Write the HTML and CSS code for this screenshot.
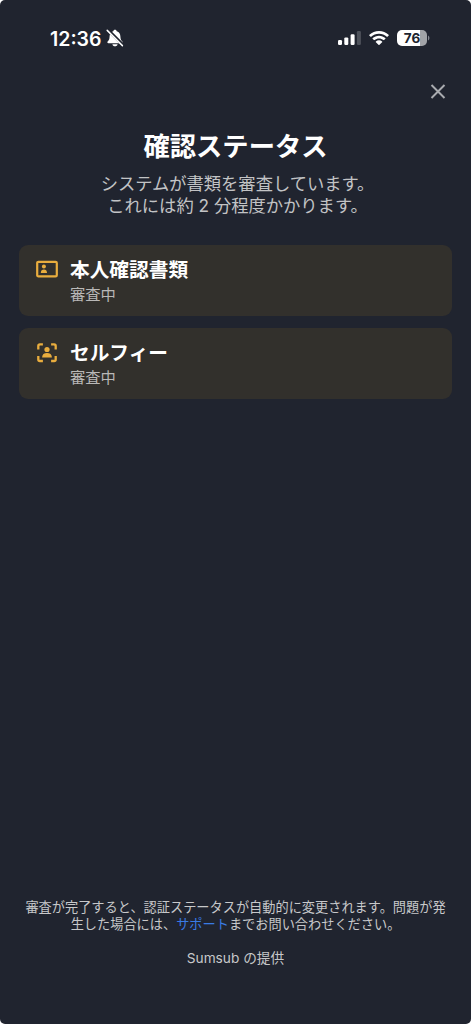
FILE: index.html
```html
<!DOCTYPE html>
<html lang="ja">
<head>
<meta charset="utf-8">
<title>確認ステータス</title>
<link rel="stylesheet" href="styles.css">
</head>
<body>
<div class="screen">
  <header class="statusbar">
    <div class="clock">
      <span class="time">12:36</span>
      <svg class="bell" width="18" height="18" viewBox="0 0 18 18">
        <path d="M9 .8C7.900 .8 7.400 1.500 7.300 2.300C4.700 3 3.700 5 3.600 7.400C3.500 10.300 2.900 11.100 1.800 12.200C1 13 1.300 14.200 2.400 14.200H15.600C16.700 14.200 17 13 16.200 12.200C15.100 11.100 14.500 10.300 14.400 7.400C14.300 5 13.300 3 10.700 2.300C10.600 1.500 10.100.8 9 .8ZM6.400 15.200H11.600C11.300 16.600 10.400 17.300 9 17.300S6.700 16.600 6.400 15.200Z" fill="#fff"/>
        <path d="M1.800 .8L17.200 16.200" stroke="#20242f" stroke-width="3.200"/>
        <path d="M1.200 1.400L16.400 16.600" stroke="#fff" stroke-width="1.500" stroke-linecap="round"/>
      </svg>
    </div>
    <div class="indicators">
      <svg width="23" height="16" viewBox="0 0 23 16" fill="#fff">
        <rect x="0" y="10" width="4" height="5" rx="1.2"/>
        <rect x="6.3" y="7.4" width="4" height="7.6" rx="1.2"/>
        <rect x="12.600" y="4.200" width="4" height="10.800" rx="1.200"/>
        <rect x="18.900" y="1" width="4" height="14" rx="1.200" fill="#4e525b"/>
      </svg>
      <svg class="wifi" width="20" height="16" viewBox="0 0 20 16" fill="#fff">
        <path d="M10 1C6.300 1 2.900 2.400.4 4.800C.1 5.100.1 5.300.3 5.500L1.500 6.700C1.700 6.900 2 6.900 2.200 6.700C4.300 4.800 7 3.700 10 3.700S15.700 4.800 17.800 6.700C18 6.900 18.300 6.900 18.500 6.700L19.700 5.500C19.900 5.300 19.900 5.100 19.600 4.800C17.100 2.400 13.700 1 10 1Z"/>
        <path d="M10 5.700C7.500 5.700 5.300 6.600 3.700 8.100C3.400 8.400 3.400 8.600 3.600 8.800L4.900 10.100C5.100 10.300 5.300 10.300 5.600 10.100C6.800 9.100 8.300 8.500 10 8.500S13.200 9.100 14.400 10.100C14.700 10.300 14.900 10.300 15.100 10.100L16.400 8.800C16.600 8.600 16.600 8.400 16.300 8.100C14.700 6.600 12.500 5.700 10 5.700Z"/>
        <path d="M10 10.300C8.800 10.300 7.700 10.700 6.900 11.400C6.600 11.700 6.600 11.900 6.900 12.200L9.500 14.800C9.800 15.100 10.200 15.100 10.500 14.800L13.100 12.200C13.400 11.900 13.400 11.700 13.100 11.400C12.300 10.700 11.200 10.300 10 10.300Z"/>
      </svg>
      <div class="battery"><div class="charge">76</div><svg width="3" height="6" viewBox="0 0 3 6"><path d="M1 .5C2.900 1.300 2.900 4.700 1 5.500Z" fill="#858890"/></svg></div>
    </div>
  </header>

  <div class="toolbar">
    <svg width="16" height="16" viewBox="0 0 16 16"><path d="M1.500 1L14.500 14M14.500 1L1.500 14" stroke="#a9abaf" stroke-width="2"/></svg>
  </div>

  <main class="content">
    <h1>確認ステータス</h1>
    <p class="lead">システムが書類を審査しています。<br>これには約 2 分程度かかります。</p>
    <section class="cards">
      <article class="card">
        <svg width="22" height="18" viewBox="0 0 22 18">
          <rect x="1.200" y="1.800" width="19.600" height="14.600" rx="1.200" fill="none" stroke="#e9ad3e" stroke-width="2.200"/>
          <circle cx="7.900" cy="6.600" r="2" fill="#e9ad3e"/>
          <path d="M4.800 13C4.800 10.500 6 9.500 7.900 9.500S11 10.500 11 13Z" fill="#e9ad3e"/>
        </svg>
        <div><h2>本人確認書類</h2><p>審査中</p></div>
      </article>
      <article class="card">
        <svg width="22" height="20" viewBox="0 0 22 20">
          <path d="M2.300 6.400V3Q2.300 1.400 3.900 1.400H6.900M15.100 1.400H18.100Q19.700 1.400 19.700 3V6.400M19.700 13V16.400Q19.700 18 18.100 18H15.100M6.900 18H3.900Q2.300 18 2.300 16.400V13" fill="none" stroke="#e9ad3e" stroke-width="2.300"/>
          <circle cx="11" cy="6.500" r="2.600" fill="#e9ad3e"/>
          <path d="M6.100 14.400C6.200 11.300 8 9.900 11 9.900S15.800 11.300 15.900 14.400Z" fill="#e9ad3e"/>
        </svg>
        <div><h2>セルフィー</h2><p>審査中</p></div>
      </article>
    </section>
  </main>

  <footer class="footer">
    <p>審査が完了すると、認証ステータスが自動的に変更されます。問題が発<br>生した場合には、<a>サポート</a>までお問い合わせください。</p>
    <p class="provider">Sumsub の提供</p>
  </footer>
</div>
</body>
</html>
```
FILE: styles.css
```css
* { box-sizing: border-box; }

body {
  margin: 0;
  background: #fff;
  font-family: Inter, "Noto Sans CJK JP", sans-serif;
}

h1, h2, p { margin: 0; }
svg { display: block; flex: none; }

.screen {
  height: 1024px;
  display: flex;
  flex-direction: column;
  background: #20242f;
  border-radius: 5px;
  color: #fff;
  overflow: hidden;
}

.statusbar {
  height: 76px;
  padding: 0 41px 0 50px;
  display: flex;
  align-items: center;
  justify-content: space-between;
}

.clock { display: flex; align-items: center; gap: 4px; }
.time { padding-top: 1px; font-size: 19.5px; font-weight: 600; line-height: 24px; }
.indicators { display: flex; align-items: center; gap: 8px; }

.battery { display: flex; align-items: center; }
.charge {
  width: 30px;
  height: 16px;
  border-radius: 5px;
  background: linear-gradient(90deg, #fff 76%, #a1a3a7 76%);
  color: #20242f;
  font-size: 13.5px;
  font-weight: 700;
  line-height: 16px;
  text-align: center;
}

.toolbar {
  height: 32px;
  padding-right: 25px;
  display: flex;
  align-items: center;
  justify-content: flex-end;
}

.content { padding: 21px 19px 0; text-align: center; }

h1 { font-size: 26.3px; font-weight: 700; line-height: 36px; }

.lead {
  margin-top: 8px;
  padding-left: 4px;
  color: #c2c3c5;
  font-size: 17.3px;
  line-height: 22px;
}

.cards {
  margin-top: 28px;
  display: flex;
  flex-direction: column;
  gap: 12px;
  text-align: left;
}

.card {
  height: 71px;
  padding: 13px 17px;
  display: flex;
  gap: 12px;
  border-radius: 9px;
  background: #32302c;
}

.card svg { margin-top: 2px; }
.card h2 { font-size: 19.7px; font-weight: 700; line-height: 25px; }
.card p { color: #b9b8b7; font-size: 15.3px; line-height: 24px; }

.footer {
  margin-top: auto;
  padding-bottom: 57px;
  color: #c7c8ca;
  font-size: 13.2px;
  line-height: 17px;
  text-align: center;
  white-space: nowrap;
}

.footer a { color: #397be4; }
.provider { margin-top: 17px; font-size: 13.7px; }
```
